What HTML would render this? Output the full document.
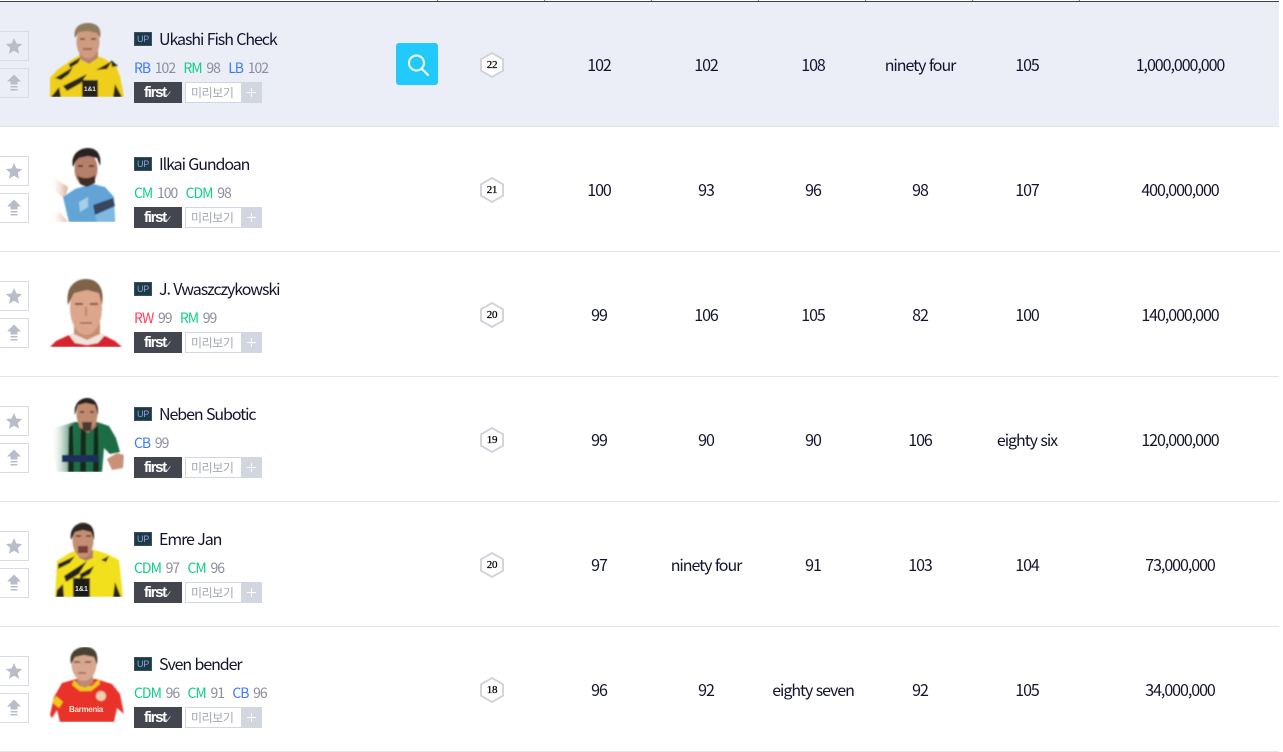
<!DOCTYPE html>
<html lang="ko"><head><meta charset="utf-8"><title>Player list</title>
<style>
*{box-sizing:border-box;margin:0;padding:0}
html,body{width:1283px;height:752px;background:#fff;overflow:hidden}
body{position:relative;font-family:"Noto Sans CJK KR","Liberation Sans",sans-serif;color:#14142e}
.top{position:absolute;left:0;top:1px;width:1279px;height:1px;background:#3d3d52}
.tick{position:absolute;top:0;width:1px;height:1px;background:#777}
.row{position:absolute;left:0;width:1279px;height:125px;border-bottom:1px solid #e1e3e8;background:#fff}
.row.on{background:#ebeef7}
.btn{position:absolute;left:-1px;width:30px;height:30px;border:1px solid #d8dbe4}
.btn svg{position:absolute;left:-1px;top:-1px}
.b1{top:29px}.b2{top:66px}
.ph{position:absolute;left:49px;top:20px;width:75px;height:75px}
.up{position:absolute;left:134px;top:30px;width:18px;height:14px;background:#123f40;border:1px solid #4d4470;color:#b08fe8;font:9px/12px "Liberation Sans",sans-serif;text-align:center;letter-spacing:-.2px}
.name{position:absolute;left:159px;top:24px;font-size:16px;line-height:24px;letter-spacing:-1.08px;white-space:nowrap}
.pos{position:absolute;left:134px;top:56px;font-size:14px;line-height:20px;letter-spacing:-1px;white-space:nowrap;color:#8b8da0}
.pos b{font-weight:400;margin-right:4.700px}.pos span{margin-right:8.300px}
.bl{color:#3a7bff}.gr{color:#10cf86}.rd{color:#ff3d60}
.first{position:absolute;left:134px;top:80px;width:48px;height:21px;background:#43464f;color:#fff;font:700 15px/22px "Liberation Sans",sans-serif;letter-spacing:-1.300px;padding-left:10px;white-space:nowrap}
.first i{font:normal 9px/21px "DejaVu Sans",sans-serif;color:#ccc;margin-left:-1px;letter-spacing:0}
.pre{position:absolute;left:185px;top:80px;width:57px;height:21px;background:#fff;border:1px solid #d2d6e0;font-size:12px;line-height:19px;color:#a4a7b4;text-align:left;padding-left:5px;letter-spacing:-.4px;white-space:nowrap}
.plus{position:absolute;left:241px;top:80px;width:21px;height:21px;background:#d2d6e0}
.plus:before{content:"";position:absolute;left:6px;top:10px;width:9px;height:1px;background:#fff}
.plus:after{content:"";position:absolute;left:10px;top:6px;width:1px;height:9px;background:#fff}
.search{position:absolute;left:396px;top:41px;width:42px;height:42px;background:#22c9fb;border-radius:3px}
.hex{position:absolute;left:480px;top:50px;width:24px;height:26px}
.hex svg{position:absolute;left:0;top:0}
.hex span{position:absolute;left:0;width:24px;top:0;text-align:center;font:400 11px/27px "Liberation Serif",serif;letter-spacing:-.3px;color:#000;-webkit-text-stroke:.25px #000}
.v{position:absolute;top:50px;width:110px;margin-left:-55px;text-align:center;font-size:16px;line-height:24px;letter-spacing:-1.05px;white-space:nowrap}
.c1{left:599px}.c2{left:706px}.c3{left:813px}.c4{left:920px}.c5{left:1027px}.c6{left:1180px;width:160px;margin-left:-80px}
.ph text{font-family:"Liberation Sans",sans-serif;font-weight:700}
</style></head><body>
<svg width="0" height="0" style="position:absolute"><defs>
<symbol id="star" viewBox="0 0 30 30"><path d="M15 7l2.400 5.500 5.800.5-4.400 3.900 1.300 5.800-5.100-3-5.100 3 1.300-5.800L6.800 13l5.800-.5z" fill="#b9bcc9"/></symbol>
<symbol id="arr" viewBox="0 0 30 30"><path d="M15 6.500l7 7h-3.500v3h-7v-3H8z" fill="#b9bcc9"/><path d="M11.500 18h7v1.500h-7zM11.500 21h7v1.500h-7z" fill="#b9bcc9"/></symbol>
<symbol id="hx" viewBox="0 0 24 26"><path d="M12 1l11 6.300v11.400L12 25 1 18.700V7.300z" fill="#fff" stroke="#d0d3db" stroke-width="1.900"/></symbol>
<filter id="bl"><feGaussianBlur stdDeviation=".7"/></filter>
<linearGradient id="fd" x1="0" x2="1" y1="0" y2="0"><stop offset="0" stop-color="#fff" stop-opacity="0"/><stop offset="1" stop-color="#d8a78f"/></linearGradient>
<linearGradient id="fg" x1="0" x2="1" y1="0" y2="0"><stop offset="0" stop-color="#fff" stop-opacity="0"/><stop offset=".35" stop-color="#1d6d45"/></linearGradient>
</defs></svg>
<div class="top"></div>
<i class="tick" style="left:437px"></i><i class="tick" style="left:544px"></i><i class="tick" style="left:651px"></i><i class="tick" style="left:758px"></i><i class="tick" style="left:865px"></i><i class="tick" style="left:972px"></i><i class="tick" style="left:1079px"></i>

<div class="row on" style="top:2px">
<div class="btn b1"><svg width="30" height="30"><use href="#star"/></svg></div><div class="btn b2"><svg width="30" height="30"><use href="#arr"/></svg></div>
<svg class="ph" viewBox="0 0 75 75"><g filter="url(#bl)"><path d="M1 75V56l7-8 16-11 7-4h14l9 3 13 8 4 10 4 21z" fill="#efcf1e"/><path d="M6 56l18-11-4 7-8 6zM14 64l24-12-6 9-14 8zM20 42l12-7-3 6-8 5zM47 48l16-9-5 8zM62 38l7 6-6 1zM2 75l8-10 2 10zM66 62l7 13h-9z" fill="#2c2718"/><rect x="33" y="58" width="16" height="17" fill="#25221a"/><path d="M30 28h19v8l-9 6-9-5z" fill="#b9836a"/><ellipse cx="39" cy="20" rx="11.500" ry="16.500" fill="#cf9a80"/><path d="M31 17h5M42 17h5" stroke="#6a4638" stroke-width="1.500"/><path d="M34 27h9" stroke="#93584c" stroke-width="1.500"/><path d="M26 16c-2-10 4-15 13-15s14 5 12 15l-3-5-9-2-9 1z" fill="#8f7a5c"/></g><text x="35" y="69" font-size="6.500" fill="#e5e5e5">1&amp;1</text></svg>
<span class="up">UP</span><div class="name">Ukashi Fish Check</div>
<div class="pos"><b class="bl">RB</b><span>102</span><b class="gr">RM</b><span>98</span><b class="bl">LB</b><span>102</span></div>
<div class="first">first<i>✓</i></div><div class="pre">미리보기</div><div class="plus"></div>
<div class="search"><svg width="42" height="42" fill="none" stroke="#fff" stroke-width="2"><circle cx="20.500" cy="20" r="7.500"/><path d="M26 26l6 6" stroke-linecap="round"/></svg></div>
<div class="hex"><svg width="24" height="26"><use href="#hx"/></svg><span>22</span></div>
<div class="v c1">102</div><div class="v c2">102</div><div class="v c3">108</div><div class="v c4">ninety four</div><div class="v c5">105</div><div class="v c6">1,000,000,000</div>
</div>

<div class="row" style="top:127px">
<div class="btn b1"><svg width="30" height="30"><use href="#star"/></svg></div><div class="btn b2"><svg width="30" height="30"><use href="#arr"/></svg></div>
<svg class="ph" viewBox="0 0 75 75"><g filter="url(#bl)"><path d="M1 68l10-3 8 10H1z" fill="url(#fd)" opacity=".8"/><path d="M1 28l18 12-3 12L1 40z" fill="url(#fd)"/><path d="M14 50l12-8 10-3 8-2 12 3 9 10 1 25H20z" fill="#63a4d6"/><path d="M44 58l20-7 2 8-20 9z" fill="#3b4460"/><path d="M46 68l19-8v15H48z" fill="#7fb9e3"/><path d="M30 55l9-5v10l-8 5z" fill="#a7cfe9"/><ellipse cx="37" cy="22" rx="11.500" ry="17" fill="#b57f69"/><path d="M29 19h5M40 19h5" stroke="#3a2620" stroke-width="1.500"/><path d="M28 28c4 4 14 4 18 0v8l-8 4-7-3z" fill="#3f2e26"/><path d="M24 20c-3-13 7-19 15-19 9 0 14 7 12 18l-3-8-9-2-9 2-3 3z" fill="#2c2420"/></g></svg>
<span class="up">UP</span><div class="name">Ilkai Gundoan</div>
<div class="pos"><b class="gr">CM</b><span>100</span><b class="gr">CDM</b><span>98</span></div>
<div class="first">first<i>✓</i></div><div class="pre">미리보기</div><div class="plus"></div>
<div class="hex"><svg width="24" height="26"><use href="#hx"/></svg><span>21</span></div>
<div class="v c1">100</div><div class="v c2">93</div><div class="v c3">96</div><div class="v c4">98</div><div class="v c5">107</div><div class="v c6">400,000,000</div>
</div>

<div class="row" style="top:252px">
<div class="btn b1"><svg width="30" height="30"><use href="#star"/></svg></div><div class="btn b2"><svg width="30" height="30"><use href="#arr"/></svg></div>
<svg class="ph" viewBox="0 0 75 75"><g filter="url(#bl)"><path d="M1 75l6-6 13-6h34l12 6 7 6z" fill="#d8232f"/><path d="M20 63l6-3 12 7 12-7 6 3-7 8-11 2-12-2z" fill="#efe4de"/><path d="M25 50h26v12l-13 6-13-6z" fill="#c98d72"/><ellipse cx="37" cy="36" rx="16" ry="27" fill="#dba68c"/><path d="M26 32h8M41 32h8" stroke="#7a5646" stroke-width="2"/><path d="M37 35v9" stroke="#bd8369" stroke-width="2"/><path d="M31 51h12" stroke="#a06456" stroke-width="1.500"/><path d="M19 33C16 14 27 7 37 7c11 0 19 8 16 26l-3-12-12-3-13 3z" fill="#7f6246"/></g></svg>
<span class="up">UP</span><div class="name">J. Vwaszczykowski</div>
<div class="pos"><b class="rd">RW</b><span>99</span><b class="gr">RM</b><span>99</span></div>
<div class="first">first<i>✓</i></div><div class="pre">미리보기</div><div class="plus"></div>
<div class="hex"><svg width="24" height="26"><use href="#hx"/></svg><span>20</span></div>
<div class="v c1">99</div><div class="v c2">106</div><div class="v c3">105</div><div class="v c4">82</div><div class="v c5">100</div><div class="v c6">140,000,000</div>
</div>

<div class="row" style="top:377px">
<div class="btn b1"><svg width="30" height="30"><use href="#star"/></svg></div><div class="btn b2"><svg width="30" height="30"><use href="#arr"/></svg></div>
<svg class="ph" viewBox="0 0 75 75"><g filter="url(#bl)"><path d="M1 32l11-3 14-4h22l12 4 7 12 4 14-10 2-6-6-2 24H8z" fill="url(#fg)"/><path d="M20 30l4-2 1 47h-6zM32 29h5v46h-6zM45 28l4 1 1 46h-6z" fill="#15291f"/><path d="M13 58h36v7H13z" fill="#1e2f5a"/><path d="M58 62l10-6 7 2-1 13-11 2z" fill="#c99278"/><path d="M30 22h17v8l-8 6-9-6z" fill="#a97560"/><ellipse cx="38" cy="17" rx="10.500" ry="16" fill="#bf8a70"/><path d="M31 15h4M41 15h4" stroke="#3a2a22" stroke-width="1.500"/><path d="M26 18C24 6 32 1 38 1c7 0 12 5 11 17l-3-10-9-2-8 2z" fill="#2a241f"/><path d="M33 25h10l-1 9h-8z" fill="#4a3a30"/></g></svg>
<span class="up">UP</span><div class="name">Neben Subotic</div>
<div class="pos"><b class="bl">CB</b><span>99</span></div>
<div class="first">first<i>✓</i></div><div class="pre">미리보기</div><div class="plus"></div>
<div class="hex"><svg width="24" height="26"><use href="#hx"/></svg><span>19</span></div>
<div class="v c1">99</div><div class="v c2">90</div><div class="v c3">90</div><div class="v c4">106</div><div class="v c5">eighty six</div><div class="v c6">120,000,000</div>
</div>

<div class="row" style="top:502px">
<div class="btn b1"><svg width="30" height="30"><use href="#star"/></svg></div><div class="btn b2"><svg width="30" height="30"><use href="#arr"/></svg></div>
<svg class="ph" viewBox="0 0 75 75"><g filter="url(#bl)"><path d="M6 75l2-36 14-9 10-2h14l12 4 12 6 4 37z" fill="#f3e01a"/><path d="M9 42l17-8-5 7-12 6zM15 54l23-15-8 13-13 8zM31 52l14-8-4 8-10 5zM52 38l8-4-3 6zM8 68l6-6 1 13H7zM66 60l6 15h-8z" fill="#25231a"/><path d="M24 56h17v19H24z" fill="#1d1c18"/><path d="M30 28h14v8l-7 3-7-3z" fill="#b17d64"/><ellipse cx="34" cy="18" rx="10.500" ry="18" fill="#c48e72"/><path d="M27 14h5M37 14h5" stroke="#4a342a" stroke-width="1.500"/><path d="M29 24h10v7h-10z" fill="#7a3f38"/><path d="M22 18C20 6 28 1 34 1c8 0 12 5 11 17l-3-8-8-2-8 2z" fill="#2c2824"/></g><text x="26" y="69" font-size="7" fill="#e5e5e5">1&amp;1</text></svg>
<span class="up">UP</span><div class="name">Emre Jan</div>
<div class="pos"><b class="gr">CDM</b><span>97</span><b class="gr">CM</b><span>96</span></div>
<div class="first">first<i>✓</i></div><div class="pre">미리보기</div><div class="plus"></div>
<div class="hex"><svg width="24" height="26"><use href="#hx"/></svg><span>20</span></div>
<div class="v c1">97</div><div class="v c2">ninety four</div><div class="v c3">91</div><div class="v c4">103</div><div class="v c5">104</div><div class="v c6">73,000,000</div>
</div>

<div class="row" style="top:627px">
<div class="btn b1"><svg width="30" height="30"><use href="#star"/></svg></div><div class="btn b2"><svg width="30" height="30"><use href="#arr"/></svg></div>
<svg class="ph" viewBox="0 0 75 75"><g filter="url(#bl)"><path d="M1 68l4-18 8-14 14-4h20l16 5 8 10 4 20-7-6-3 14H11l-3-12-5 8z" fill="#e9332b"/><path d="M3 55l4-6 7 6-4 6zM25 33l6 6 12 0 7-7 1 5-9 7H31l-8-6z" fill="#f0c71c"/><circle cx="52" cy="49" r="5" fill="#f0d0b0"/><path d="M28 26h16v10l-8 5-8-4z" fill="#bd8970"/><ellipse cx="35" cy="17" rx="12.500" ry="17" fill="#d8a78f"/><path d="M25 15h6M36 15h6" stroke="#6a4a3c" stroke-width="1.500"/><path d="M29 26h8" stroke="#a06456" stroke-width="1.500"/><path d="M22 17C19 5 28 0 36 0c9 0 14 5 12 18l-3-8-10-2-9 2z" fill="#4a4232"/></g><text x="20" y="65" font-size="8" letter-spacing="-.3" fill="#f5e4d0">Barmenia</text></svg>
<span class="up">UP</span><div class="name">Sven bender</div>
<div class="pos"><b class="gr">CDM</b><span>96</span><b class="gr">CM</b><span>91</span><b class="bl">CB</b><span>96</span></div>
<div class="first">first<i>✓</i></div><div class="pre">미리보기</div><div class="plus"></div>
<div class="hex"><svg width="24" height="26"><use href="#hx"/></svg><span>18</span></div>
<div class="v c1">96</div><div class="v c2">92</div><div class="v c3">eighty seven</div><div class="v c4">92</div><div class="v c5">105</div><div class="v c6">34,000,000</div>
</div>
</body></html>
